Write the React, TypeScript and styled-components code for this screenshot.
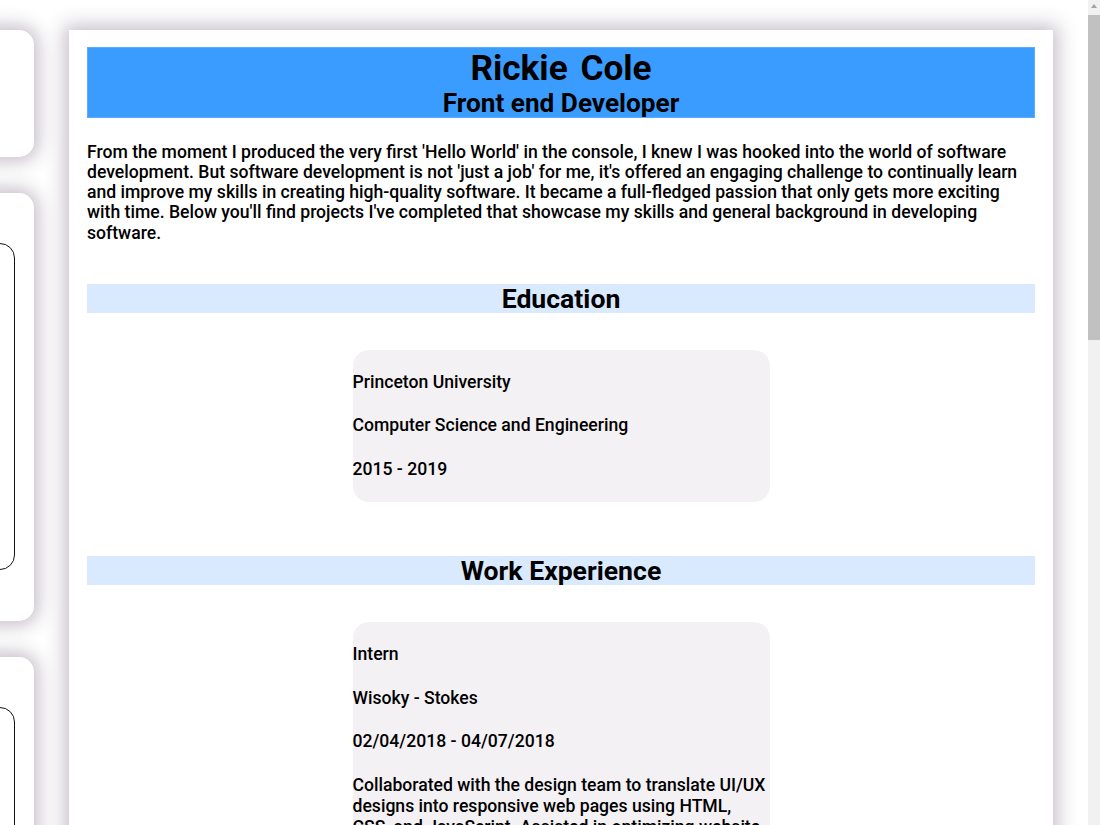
import React from "react";
import styled, { createGlobalStyle } from "styled-components";

const Global = createGlobalStyle`
  html { scrollbar-width: none; }
  ::-webkit-scrollbar { display: none; }
  body {
    margin: 0;
    background: #ffffff;
    font-family: Roboto, "Liberation Sans", Arial, sans-serif;
    color: #000;
  }
`;

const Page = styled.div`
  display: flex;
  align-items: flex-start;
  gap: 35px;
  padding: 30px 47px 40px 0;
  overflow: hidden;
`;

const ScrollTrack = styled.div`
  position: fixed;
  top: 0;
  right: 0;
  width: 12px;
  height: 100vh;
  background: #f1f1f1;
  display: flex;
  flex-direction: column;
  align-items: center;
`;

const ScrollArrow = styled.div`
  width: 0;
  height: 0;
  margin-top: 4px;
  border-left: 3px solid transparent;
  border-right: 3px solid transparent;
  border-bottom: 4px solid #a3a3a3;
`;

const ScrollThumb = styled.div`
  width: 12px;
  height: 325px;
  margin-top: 7px;
  background: #c1c1c1;
`;

const Sidebar = styled.aside`
  flex: 0 0 300px;
  margin-left: -266px;
  display: flex;
  flex-direction: column;
  gap: 36px;
`;

const SideCard = styled.div<{ $h: number }>`
  height: ${(p) => p.$h}px;
  background: #fff;
  border-radius: 15px;
  box-shadow: 0 0 18px 5px rgba(80, 60, 90, 0.32);
  padding: 50px 19px 0 19px;
  box-sizing: border-box;
`;

const SideInner = styled.div<{ $h: number }>`
  height: ${(p) => p.$h}px;
  border: 1.5px solid #111;
  border-radius: 15px;
`;

const Main = styled.main`
  flex: 1 1 auto;
  background: #fff;
  box-shadow: 0 0 18px 5px rgba(80, 60, 90, 0.32);
  padding: 17px 18px 40px;
  min-height: 2000px;
`;

const Header = styled.header`
  background: #3a9cff;
  border: 1px solid #5aacff;
  text-align: center;
  display: flex;
  flex-direction: column;
`;

const Name = styled.h1`
  margin: 0;
  font-size: 35.2px;
  line-height: 41px;
  font-weight: 700;
  word-spacing: 4px;
`;

const Role = styled.h2`
  margin: 0;
  font-size: 26.2px;
  line-height: 28px;
  font-weight: 700;
`;

const Intro = styled.p`
  margin: 23.5px 0 41px;
  font-size: 17.6px;
  line-height: 20.3px;
  font-weight: 500;
`;

const SectionTitle = styled.h2`
  margin: 0;
  background: #d9eaff;
  text-align: center;
  font-size: 26.6px;
  line-height: 29px;
  font-weight: 700;
`;

const Section = styled.section`
  margin-bottom: 54px;
`;

const Card = styled.div`
  width: 417px;
  margin: 37px auto 0;
  background: #f4f1f5;
  border-radius: 16px;
  padding: 22px 0 22.5px;
  display: flex;
  flex-direction: column;
  gap: 22.5px;
`;

const Line = styled.p`
  margin: 0;
  font-size: 17.6px;
  line-height: 21px;
  font-weight: 500;
`;

const education = [
  ["Princeton University", "Computer Science and Engineering", "2015 - 2019"],
];

const work = [
  {
    title: "Intern",
    company: "Wisoky - Stokes",
    dates: "02/04/2018 - 04/07/2018",
    desc: "Collaborated with the design team to translate UI/UX designs into responsive web pages using HTML, CSS, and JavaScript. Assisted in optimizing website performance and fixing cross-browser compatibility issues.",
  },
  {
    title: "Junior Front End Developer",
    company: "Hegmann LLC",
    dates: "06/01/2019 - 08/15/2021",
    desc: "Built reusable React components and maintained the company design system. Worked closely with backend engineers to integrate REST APIs and improve page load times.",
  },
];

export default function App() {
  return (
    <>
      <Global />
      <Page>
        <Sidebar>
          <SideCard $h={127} />
          <SideCard $h={428}>
            <SideInner $h={325} />
          </SideCard>
          <SideCard $h={600}>
            <SideInner $h={400} />
          </SideCard>
        </Sidebar>
        <Main>
          <Header>
            <Name>Rickie Cole</Name>
            <Role>Front end Developer</Role>
          </Header>
          <Intro>
            From the moment I produced the very first 'Hello World' in the console, I knew I was
            hooked into the world of software development. But software development is not 'just a
            job' for me, it's offered an engaging challenge to continually learn and improve my
            skills in creating high-quality software. It became a full-fledged passion that only
            gets more exciting with time. Below you'll find projects I've completed that showcase my
            skills and general background in developing software.
          </Intro>
          <Section>
            <SectionTitle>Education</SectionTitle>
            {education.map((e) => (
              <Card key={e[0]}>
                {e.map((l) => (
                  <Line key={l}>{l}</Line>
                ))}
              </Card>
            ))}
          </Section>
          <Section>
            <SectionTitle>Work Experience</SectionTitle>
            {work.map((w) => (
              <Card key={w.title}>
                <Line>{w.title}</Line>
                <Line>{w.company}</Line>
                <Line>{w.dates}</Line>
                <Line>{w.desc}</Line>
              </Card>
            ))}
          </Section>
        </Main>
      </Page>
      <ScrollTrack>
        <ScrollArrow />
        <ScrollThumb />
      </ScrollTrack>
    </>
  );
}
